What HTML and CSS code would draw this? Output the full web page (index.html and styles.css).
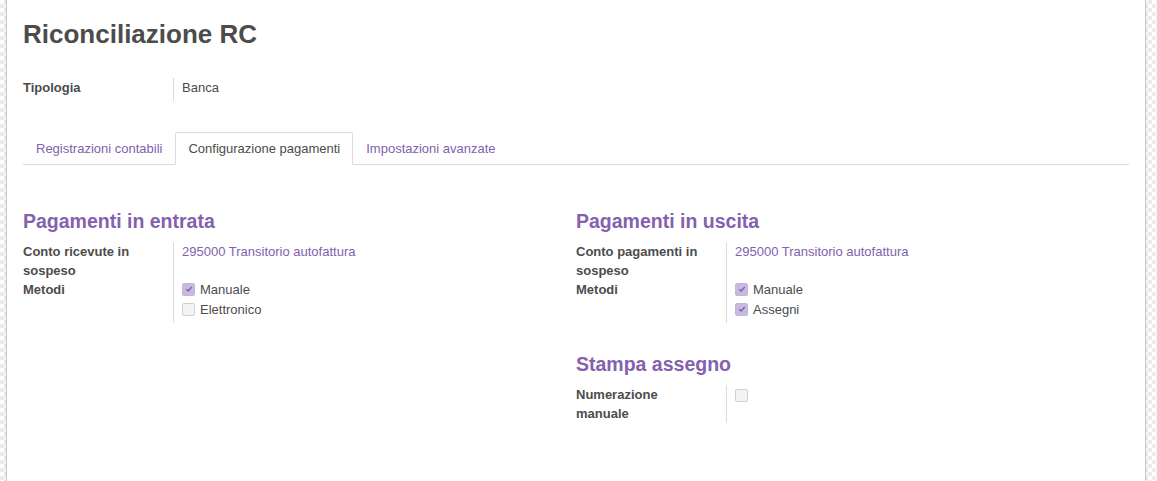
FILE: index.html
```html
<!DOCTYPE html>
<html lang="it">
<head>
<meta charset="utf-8">
<title>Riconciliazione RC</title>
<link rel="stylesheet" href="styles.css">
</head>
<body>
<div class="sheet">
  <h1 class="title">Riconciliazione RC</h1>
  <div class="fields top-fields">
    <div class="label">Tipologia</div>
    <div class="value tall">Banca</div>
  </div>
  <div class="notebook">
    <ul class="tabs">
      <li class="tab"><span class="tab-link">Registrazioni contabili</span></li>
      <li class="tab active"><span class="tab-link">Configurazione pagamenti</span></li>
      <li class="tab"><span class="tab-link">Impostazioni avanzate</span></li>
    </ul>
    <div class="pane">
      <div class="col">
        <h2 class="sep">Pagamenti in entrata</h2>
        <div class="fields">
          <div class="label">Conto ricevute in sospeso</div>
          <div class="value"><span class="link">295000 Transitorio autofattura</span></div>
          <div class="label">Metodi</div>
          <div class="value list">
            <div class="check-row"><span class="cb checked"><svg viewBox="0 0 8 8" width="8" height="8"><path d="M1.3 4.2 L3.2 6 L6.7 2" fill="none" stroke="#7f62ad" stroke-width="1.4"/></svg></span>Manuale</div>
            <div class="check-row"><span class="cb"></span>Elettronico</div>
          </div>
        </div>
      </div>
      <div class="col">
        <h2 class="sep">Pagamenti in uscita</h2>
        <div class="fields">
          <div class="label">Conto pagamenti in sospeso</div>
          <div class="value"><span class="link">295000 Transitorio autofattura</span></div>
          <div class="label">Metodi</div>
          <div class="value list">
            <div class="check-row"><span class="cb checked"><svg viewBox="0 0 8 8" width="8" height="8"><path d="M1.3 4.2 L3.2 6 L6.7 2" fill="none" stroke="#7f62ad" stroke-width="1.4"/></svg></span>Manuale</div>
            <div class="check-row"><span class="cb checked"><svg viewBox="0 0 8 8" width="8" height="8"><path d="M1.3 4.2 L3.2 6 L6.7 2" fill="none" stroke="#7f62ad" stroke-width="1.4"/></svg></span>Assegni</div>
          </div>
        </div>
        <h2 class="sep second">Stampa assegno</h2>
        <div class="fields">
          <div class="label">Numerazione manuale</div>
          <div class="value"><span class="cb solo"></span></div>
        </div>
      </div>
    </div>
  </div>
</div>
</body>
</html>
```

FILE: styles.css
```css
* { box-sizing: border-box; }

html, body {
  margin: 0;
  padding: 0;
  height: 100%;
}

body {
  font-family: "Liberation Sans", Arial, sans-serif;
  font-size: 13px;
  color: #4c4c4c;
  background-color: #fff;
  background-image:
    conic-gradient(#ececec 25%, #fff 25% 50%, #ececec 50% 75%, #fff 75%);
  background-size: 8px 8px;
  overflow: hidden;
}

.sheet {
  margin-left: 6px;
  width: 1140px;
  min-height: 100%;
  background: #fff;
  border-left: 1px solid #c9c9cf;
  border-right: 1px solid #c9c9d3;
  box-shadow: 0 0 3px rgba(0, 0, 0, 0.12);
  padding: 17px 16px 40px;
}

.title {
  margin: 0;
  font-size: 26px;
  line-height: 34px;
  font-weight: bold;
  color: #4c4c4c;
}

.fields {
  display: grid;
  grid-template-columns: 150px 1fr;
  line-height: 19px;
}

.top-fields {
  margin-top: 27px;
  line-height: 19.5px;
}

.label {
  font-weight: bold;
  padding-right: 16px;
}

.value {
  border-left: 1px solid #dcdcdc;
  padding-left: 8px;
}

.value.tall {
  min-height: 23px;
}

.value.list {
  padding-bottom: 3px;
}

.link {
  color: #7f62ad;
}

.notebook {
  margin-top: 31px;
}

.tabs {
  list-style: none;
  margin: 0;
  padding: 0;
  display: flex;
  border-bottom: 1px solid #dcdcdc;
}

.tab {
  margin-bottom: -1px;
}

.tab-link {
  display: block;
  padding: 7px 12px 6px;
  line-height: 18px;
  border: 1px solid transparent;
  border-radius: 2px 2px 0 0;
  color: #7f62ad;
}

.tab.active .tab-link {
  color: #4c4c4c;
  background: #fff;
  border-color: #dcdcdc #dcdcdc #fff;
}

.pane {
  display: grid;
  grid-template-columns: 1fr 1fr;
  padding-top: 44px;
}

.sep {
  margin: 0 0 9px;
  font-size: 19.5px;
  line-height: 24px;
  font-weight: bold;
  color: #8461ae;
}

.sep.second {
  margin-top: 29px;
}

.check-row {
  display: flex;
  align-items: center;
  height: 20px;
  padding-bottom: 2px;
}

.cb {
  width: 13px;
  height: 13px;
  border: 1px solid #cfcfcf;
  border-radius: 2px;
  background: #f4f4f4;
  margin-right: 5px;
  display: inline-flex;
  align-items: center;
  justify-content: center;
  flex: none;
}

.cb.checked {
  background: #c7b9df;
  border-color: #c2b6da;
}

.cb.solo {
  margin-top: 4px;
}
```
